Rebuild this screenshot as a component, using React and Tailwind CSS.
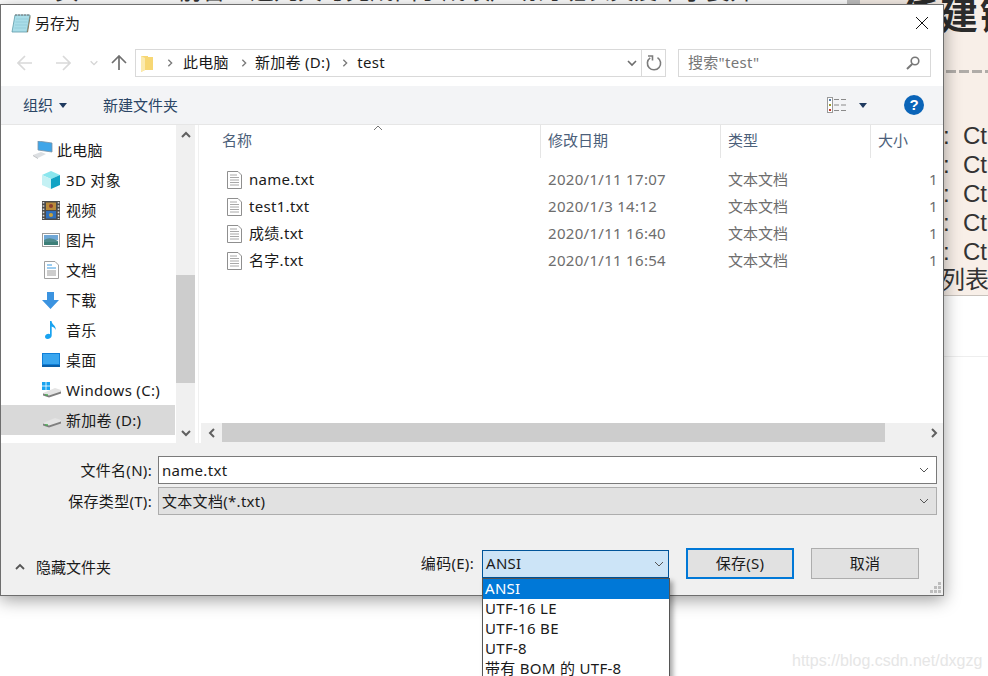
import React from 'react';

const FONT = "font-['Noto_Sans','Noto_Sans_CJK_SC',sans-serif]";

function Chevron({ dir = 'down', className = '', color = '#6d6d6d', w = 1.6, size = 12 }) {
  const d = {
    down: 'M2 4 L6 8 L10 4',
    up: 'M2 8 L6 4 L10 8',
    left: 'M8 2 L4 6 L8 10',
    right: 'M4 2 L8 6 L4 10',
  }[dir];
  return (
    <svg width={size} height={size} viewBox="0 0 12 12" className={className}>
      <path d={d} fill="none" stroke={color} strokeWidth={w} />
    </svg>
  );
}

function Caret() {
  return (
    <svg width="8" height="5" viewBox="0 0 8 5">
      <path d="M0 0 H8 L4 5 Z" fill="#1f3a5f" />
    </svg>
  );
}

function NotepadIcon() {
  return (
    <svg width="20" height="20" viewBox="0 0 20 20">
      <path d="M4 2 H19 L16 19 H1 Z" fill="#a9dde8" stroke="#5d9aa8" strokeWidth="0.8" />
      <path d="M5 6 H17 M4.5 9 H16.5 M4 12 H16 M3.5 15 H15" stroke="#8cc6d4" strokeWidth="0.7" />
      <path d="M5 1 V3 M8 1 V3 M11 1 V3 M14 1 V3 M17 1 V3" stroke="#777" strokeWidth="1" />
      <path d="M16 19 L19 2 L19.5 4 L17 19.5 Z" fill="#8a7a5a" />
    </svg>
  );
}

function ArrowIcon({ dir = 'left', color = '#d9d9d9' }) {
  const rot = { left: 0, right: 180, up: 90 }[dir];
  return (
    <svg width="16" height="16" viewBox="0 0 16 16" style={{ transform: `rotate(${rot}deg)` }}>
      <path d="M1 8 H15 M8 1 L1 8 L8 15" fill="none" stroke={color} strokeWidth="1.7" />
    </svg>
  );
}

function FolderSmall() {
  return (
    <svg width="13" height="17" viewBox="0 0 13 17">
      <path d="M0 1 H7 V2 H12 V15 H4 L0 17 Z" fill="#f7d774" />
      <path d="M0 1 L4 3 V15 L0 17 Z" fill="#fbeaae" />
    </svg>
  );
}

function RefreshIcon() {
  return (
    <svg width="16" height="16" viewBox="0 0 16 16">
      <path d="M11.5 2.6 A6.6 6.6 0 1 1 4.2 2.8" fill="none" stroke="#7c7c7c" strokeWidth="1.6" />
      <path d="M2 1 H6.5 V5.5" fill="none" stroke="#7c7c7c" strokeWidth="1.6" />
    </svg>
  );
}

function SearchIcon() {
  return (
    <svg width="14" height="14" viewBox="0 0 14 14">
      <circle cx="9" cy="5" r="3.8" fill="none" stroke="#777" strokeWidth="1.6" />
      <path d="M6.2 8 L1 13" stroke="#777" strokeWidth="2" />
    </svg>
  );
}

function ViewsIcon() {
  return (
    <svg width="19" height="16" viewBox="0 0 19 16">
      <rect x="0.5" y="0.5" width="5" height="15" fill="#fff" stroke="#9a9a9a" />
      <rect x="2" y="2" width="2" height="2" fill="#5a7fa8" />
      <rect x="2" y="7" width="2" height="2" fill="#9a9a30" />
      <rect x="2" y="12" width="2" height="2" fill="#c0392b" />
      <path d="M7 2.5 H12 M14 2.5 H19 M7 8 H12 M14 8 H19 M7 13.5 H12 M14 13.5 H19" stroke="#8a8a8a" strokeWidth="1" />
    </svg>
  );
}

function HelpIcon() {
  return (
    <div className="w-5 h-5 rounded-full bg-[#0a64b8] text-white text-[15px] font-bold flex items-center justify-center font-['Liberation_Sans',sans-serif]">
      ?
    </div>
  );
}

function PcIcon() {
  return (
    <svg width="20" height="18" viewBox="0 0 20 18">
      <path d="M5 0 L19 2 V11 L5 9 Z" fill="#3fa5e8" stroke="#7d93a5" strokeWidth="0.8" />
      <path d="M0 14 L8 11 L13 13 L5 17 Z" fill="#dcdfe2" />
      <path d="M0 14 L5 17 V18 L0 15 Z" fill="#b9bcbf" />
    </svg>
  );
}

function CubeIcon() {
  return (
    <svg width="18" height="18" viewBox="0 0 18 18">
      <path d="M9 0 L18 4 L9 8 L0 4 Z" fill="#8ae6ee" />
      <path d="M0 4 L9 8 V18 L0 14 Z" fill="#c4f1f4" />
      <path d="M18 4 L9 8 V18 L18 14 Z" fill="#12a3c4" />
    </svg>
  );
}

function FilmIcon() {
  return (
    <svg width="18" height="19" viewBox="0 0 18 19">
      <rect width="18" height="19" fill="#4b4b4b" />
      <path d="M1.5 1 V18 M16.5 1 V18" stroke="#d8d8d8" strokeWidth="1.6" strokeDasharray="1.6 1.6" />
      <rect x="4" y="1.5" width="10" height="7.5" fill="#b98a3a" />
      <rect x="4" y="10" width="10" height="7.5" fill="#2f6fbd" />
      <circle cx="9" cy="5" r="2" fill="#8a3b2f" />
      <circle cx="9" cy="14" r="2" fill="#c9a23a" />
    </svg>
  );
}

function PictureIcon() {
  return (
    <svg width="18" height="14" viewBox="0 0 18 14">
      <rect x="0.5" y="0.5" width="17" height="13" fill="#fff" stroke="#9c9c9c" />
      <rect x="2" y="2" width="14" height="5" fill="#6fa7d6" />
      <path d="M2 7 Q8 3 16 8 V12 H2 Z" fill="#4f8a8b" />
      <rect x="2" y="9" width="14" height="3" fill="#3d7f78" />
    </svg>
  );
}

function DocIcon() {
  return (
    <svg width="15" height="18" viewBox="0 0 15 18" className="ml-[2px]">
      <path d="M.5 .5 H11 L14.5 4 V17.5 H.5 Z" fill="#fff" stroke="#a0a0a0" />
      <path d="M3 4 H8 M3 7 H12" stroke="#3a9ae0" strokeWidth="1" />
      <path d="M3 10 H12 M3 12 H12 M3 14 H12" stroke="#9a9a9a" strokeWidth="1" />
    </svg>
  );
}

function DownIcon() {
  return (
    <svg width="17" height="17" viewBox="0 0 17 17">
      <path d="M5 0 H12 V8 H17 L8.5 17 L0 8 H5 Z" fill="#3b93e0" />
    </svg>
  );
}

function NoteIcon() {
  return (
    <svg width="12" height="18" viewBox="0 0 12 18" className="ml-[3px]">
      <path d="M5 0 H6.5 C7 4 11.5 4.5 10.5 9 C10 6.5 8 6 6.7 5.5 V14.5 C6.7 16.5 4.5 18 2.5 18 C.8 18 0 17 0 15.8 C0 14 2 12.8 3.6 12.8 C4.2 12.8 4.7 13 5 13.2 Z" fill="#19a3f0" />
    </svg>
  );
}

function DesktopIcon() {
  return (
    <svg width="18" height="14" viewBox="0 0 18 14">
      <rect width="18" height="13" fill="#0f7fd8" />
      <rect x="1" y="1" width="16" height="10" fill="#3aa6ef" />
      <rect y="12" width="18" height="2" fill="#0b5fa8" />
    </svg>
  );
}

function DriveIcon({ win }) {
  return (
    <svg width="20" height="16" viewBox="0 0 20 16">
      {win && (
        <g fill="#19a3f0">
          <rect x="0" y="0" width="3.6" height="3.6" />
          <rect x="4.4" y="0" width="3.6" height="3.6" />
          <rect x="0" y="4.4" width="3.6" height="3.6" />
          <rect x="4.4" y="4.4" width="3.6" height="3.6" />
        </g>
      )}
      <path d="M1 11 L13 6 L19 8 V11 L7 15 L1 13 Z" fill="#e4e4e4" />
      <path d="M1 11.5 L7 13.5 L19 9.5 V11.5 L7 15.5 L1 13.5 Z" fill="#7f7f7f" />
      <rect x="3" y="12.3" width="3" height="1.2" fill="#3fb04a" />
    </svg>
  );
}

function FileIcon() {
  return (
    <svg width="15" height="18" viewBox="0 0 15 18">
      <path d="M.5 .5 H11 L14.5 4 V17.5 H.5 Z" fill="#fff" stroke="#8f8f8f" />
      <path d="M3 4 H10 M3 6.5 H12 M3 9 H12 M3 11.5 H12 M3 14 H12" stroke="#a8a8a8" strokeWidth="1" />
    </svg>
  );
}

const NAV = [
  { icon: <PcIcon />, label: '此电脑', root: true },
  { icon: <CubeIcon />, label: '3D 对象' },
  { icon: <FilmIcon />, label: '视频' },
  { icon: <PictureIcon />, label: '图片' },
  { icon: <DocIcon />, label: '文档' },
  { icon: <DownIcon />, label: '下载' },
  { icon: <NoteIcon />, label: '音乐' },
  { icon: <DesktopIcon />, label: '桌面' },
  { icon: <DriveIcon win />, label: 'Windows (C:)' },
  { icon: <DriveIcon />, label: '新加卷 (D:)', selected: true },
];

const FILES = [
  { name: 'name.txt', date: '2020/1/11 17:07' },
  { name: 'test1.txt', date: '2020/1/3 14:12' },
  { name: '成绩.txt', date: '2020/1/11 16:40' },
  { name: '名字.txt', date: '2020/1/11 16:54' },
];

const ENCODINGS = ['UTF-16 LE', 'UTF-16 BE', 'UTF-8', '带有 BOM 的 UTF-8'];

function Page() {
  return (
    <div className="w-[988px] h-[676px] bg-white flex flex-col overflow-hidden">
      <div className="flex h-[296px] shrink-0">
        <div className="w-[847px] shrink-0 overflow-hidden text-[#333] text-[24px] leading-[30px] -mt-[25px] whitespace-nowrap flex">
          <span className="w-[178px] shrink-0 pl-[12px]">一 · 页</span>
          <span>前言：这几天与完成由于成绩广场为班长关爱帮了委开</span>
        </div>
        <div className="w-[13px] bg-[#c1c1c1] shrink-0" />
        <div className="flex-1 min-w-0 bg-[#f8efe8] border-b border-[#c9c3bd] text-[#333] overflow-hidden">
          <div className="text-[38px] leading-[40px] font-bold whitespace-nowrap pl-[40px] -mt-[6px] tracking-[2px] text-[#2c2c2c]">
            任建键
          </div>
          <div className="ml-[86px] mt-[36px] flex gap-[3px]">
            {[0, 1, 2, 3].map(i => (
              <div key={i} className="w-[10px] h-[3px] shrink-0 bg-[#b0aca8]" />
            ))}
          </div>
          <div className="mt-[48px] pl-[83px] text-[24px] leading-[29px] whitespace-nowrap text-[#333]">
            {[0, 1, 2, 3, 4].map(i => (
              <div key={i} className="flex font-['Liberation_Sans',sans-serif]">
                <span className="w-[20px] shrink-0">:</span>
                <span className="shrink-0">Ctrl</span>
              </div>
            ))}
            <div className={`-mt-[2px] -ml-[2px] ${FONT}`}>列表</div>
          </div>
        </div>
      </div>
      <div className="mt-[60px] border-t border-[#eeeeee]" />
    </div>
  );
}

function Dialog() {
  return (
    <div className={`absolute left-0 top-[4px] w-[944px] h-[592px] bg-white border border-[#6e6e6e] shadow-[0_4px_16px_rgba(0,0,0,0.38)] flex flex-col text-[15px] tracking-[0.3px] text-[#1a1a1a] ${FONT}`}>
      {/* title bar */}
      <div className="h-[39px] shrink-0 flex items-center pl-[10px] pr-[15px] pb-[3px]">
        <NotepadIcon />
        <span className="ml-[4px] tracking-normal">另存为</span>
        <svg width="12" height="12" viewBox="0 0 12 12" className="ml-auto">
          <path d="M0 0 L12 12 M12 0 L0 12" stroke="#111" strokeWidth="1" />
        </svg>
      </div>

      {/* nav row */}
      <div className="h-[42px] shrink-0 flex items-center pb-[4px]">
        <div className="ml-[16px]"><ArrowIcon dir="left" /></div>
        <div className="ml-[22px]"><ArrowIcon dir="right" /></div>
        <Chevron className="ml-[18px]" color="#d5d5d5" size={10} />
        <div className="ml-[12px]"><ArrowIcon dir="up" color="#6f6f6f" /></div>
        <div className="ml-[8px] w-[531px] h-[28px] border border-[#d9d9d9] flex items-center">
          <div className="ml-[5px]"><FolderSmall /></div>
          <Chevron dir="right" className="ml-[11px]" size={10} color="#7a7a7a" />
          <span className="ml-[8px] pb-[2px]">此电脑</span>
          <Chevron dir="right" className="ml-[10px]" size={10} color="#7a7a7a" />
          <span className="ml-[6px] pb-[2px]">新加卷 (D:)</span>
          <Chevron dir="right" className="ml-[10px]" size={10} color="#7a7a7a" />
          <span className="ml-[7px] pb-[2px]">test</span>
          <Chevron className="ml-auto mr-[3px]" color="#6d6d6d" />
          <div className="w-[24px] h-full border-l border-[#d9d9d9] flex items-center justify-center">
            <RefreshIcon />
          </div>
        </div>
        <div className="ml-[12px] w-[253px] h-[28px] border border-[#d9d9d9] flex items-center pl-[9px] pr-[10px] text-[#777]">
          <span className="pb-[2px]">搜索"test"</span>
          <div className="ml-auto"><SearchIcon /></div>
        </div>
      </div>

      {/* toolbar */}
      <div className="h-[38px] shrink-0 bg-[#f3f4f6] flex items-center pl-[22px] pr-[19px] text-[#2a4565] tracking-normal">
        <span>组织</span>
        <div className="ml-[6px]"><Caret /></div>
        <span className="ml-[36px]">新建文件夹</span>
        <div className="ml-auto"><ViewsIcon /></div>
        <div className="ml-[13px] mr-[37px]"><Caret /></div>
        <HelpIcon />
      </div>

      {/* main */}
      <div className="flex-1 min-h-0 flex border-t border-[#e6e6e6]">
        <div className="w-[175px] shrink-0 pt-[10px]">
          {NAV.map(item => (
            <div
              key={item.label}
              className={`h-[30px] mr-[1px] flex items-center whitespace-nowrap ${item.selected ? 'bg-[#d9d9d9]' : ''} ${item.root ? 'pl-[32px]' : 'pl-[41px]'}`}
            >
              <div className="w-[24px] flex justify-start shrink-0">{item.icon}</div>
              <span>{item.label}</span>
            </div>
          ))}
        </div>

        <div className="w-[19px] shrink-0 bg-[#f0f0f0] flex flex-col">
          <div className="h-[20px] flex items-center justify-center"><Chevron dir="up" size={12} w={2} color="#606060" /></div>
          <div className="h-[130px]" />
          <div className="h-[108px] bg-[#cdcdcd]" />
          <div className="flex-1" />
          <div className="h-[20px] flex items-center justify-center"><Chevron size={12} w={2} color="#606060" /></div>
        </div>
        <div className="w-[4px] shrink-0 border-r border-[#f0f0f0]" />

        <div className="flex-1 min-w-0 flex flex-col overflow-hidden">
          <div className="h-[33px] shrink-0 flex text-[#4c607a] tracking-normal relative">
            <div className="w-[342px] shrink-0 flex items-center pl-[23px] pb-[2px] border-r border-[#e5e5e5]">名称</div>
            <div className="w-[180px] shrink-0 flex items-center pl-[7px] pb-[2px] border-r border-[#e5e5e5]">修改日期</div>
            <div className="w-[150px] shrink-0 flex items-center pl-[7px] pb-[2px] border-r border-[#e5e5e5]">类型</div>
            <div className="flex-1 flex items-center pl-[7px] pb-[2px]">大小</div>
            <Chevron dir="up" size={12} w={1} color="#777" className="absolute left-[173px] -top-[3px]" />
          </div>
          <div className="flex-1 pt-[8px]">
            {FILES.map(f => (
              <div key={f.name} className="h-[27px] flex items-center whitespace-nowrap">
                <div className="w-[341px] shrink-0 flex items-center pl-[28px]">
                  <FileIcon />
                  <span className="ml-[7px]">{f.name}</span>
                </div>
                <div className="w-[180px] shrink-0 pl-[8px] text-[#6d6d6d]">{f.date}</div>
                <div className="w-[150px] shrink-0 pl-[8px] text-[#6d6d6d] tracking-normal">文本文档</div>
                <div className="flex-1 text-right pr-[5px] text-[#6d6d6d]">1</div>
              </div>
            ))}
          </div>
          <div className="h-[20px] shrink-0 ml-[2px] flex bg-[#f0f0f0]">
            <div className="w-[21px] flex items-center justify-center"><Chevron dir="left" size={12} w={2} color="#606060" /></div>
            <div className="w-[663px] h-[19px] bg-[#cdcdcd]" />
            <div className="flex-1 flex items-center justify-end pr-[3px]"><Chevron dir="right" size={12} w={2} color="#606060" /></div>
          </div>
        </div>
      </div>

      {/* footer */}
      <div className="h-[152px] shrink-0 bg-[#f0f0f0] pt-[13px] flex flex-col">
        <div className="flex items-center h-[28px]">
          <div className="w-[151px] text-right shrink-0">文件名(N):</div>
          <div className="ml-[6px] w-[779px] h-full bg-white border border-[#7a7a7a] flex items-center pl-[3px] pr-[6px]">
            <span>name.txt</span>
            <Chevron className="ml-auto" size={12} w={1} color="#555" />
          </div>
        </div>
        <div className="flex items-center h-[28px] mt-[3px]">
          <div className="w-[151px] text-right shrink-0">保存类型(T):</div>
          <div className="ml-[6px] w-[779px] h-full bg-[#e1e1e1] border border-[#adadad] flex items-center pl-[3px] pr-[6px]">
            <span>文本文档(*.txt)</span>
            <Chevron className="ml-auto" size={12} w={1} color="#555" />
          </div>
        </div>
        <div className="flex items-center h-[31px] mt-[33px] pl-[13px] pr-[24px]">
          <Chevron dir="up" size={12} w={1.8} color="#555" className="mt-[7px]" />
          <span className="ml-[10px] mt-[7px] tracking-normal">隐藏文件夹</span>
          <span className="ml-auto">编码(E):</span>
          <div className="relative ml-[8px] w-[187px] h-[28px] bg-[#cce4f7] border border-[#005499] flex items-center pl-[3px] pr-[3px]">
            <span>ANSI</span>
            <Chevron className="ml-auto" size={12} w={1} color="#555" />
            <div className="absolute top-[27px] -left-[1px] w-[188px] bg-white border border-[#555] shadow-[3px_3px_5px_rgba(0,0,0,0.35)] h-[120px] whitespace-nowrap">
              <div className="h-[20px] bg-[#0078d7] text-white flex items-center pl-[2px]">ANSI</div>
              {ENCODINGS.map(e => (
                <div key={e} className="h-[20px] flex items-center pl-[2px]">{e}</div>
              ))}
            </div>
          </div>
          <button className="ml-[17px] w-[108px] h-[31px] bg-[#e1e1e1] border-2 border-[#0078d7]">保存(S)</button>
          <button className="ml-[17px] w-[108px] h-[31px] bg-[#e1e1e1] border border-[#adadad]">取消</button>
        </div>
        <svg width="12" height="12" viewBox="0 0 12 12" className="absolute right-[1px] bottom-[1px]">
          <path d="M8 0 H11 V3 H8 Z M4 4 H7 V7 H4 Z M8 4 H11 V7 H8 Z M0 8 H3 V11 H0 Z M4 8 H7 V11 H4 Z M8 8 H11 V11 H8 Z" fill="#bdbdbd" />
        </svg>
      </div>
    </div>
  );
}

export default function App() {
  return (
    <div className={`relative w-[988px] h-[676px] overflow-hidden ${FONT}`}>
      <Page />
      <Dialog />
      <div className="absolute left-[792px] top-[649px] text-[16px] text-[#e6e6e6] font-['Liberation_Sans',sans-serif]">
        https://blog.csdn.net/dxgzg
      </div>
    </div>
  );
}
